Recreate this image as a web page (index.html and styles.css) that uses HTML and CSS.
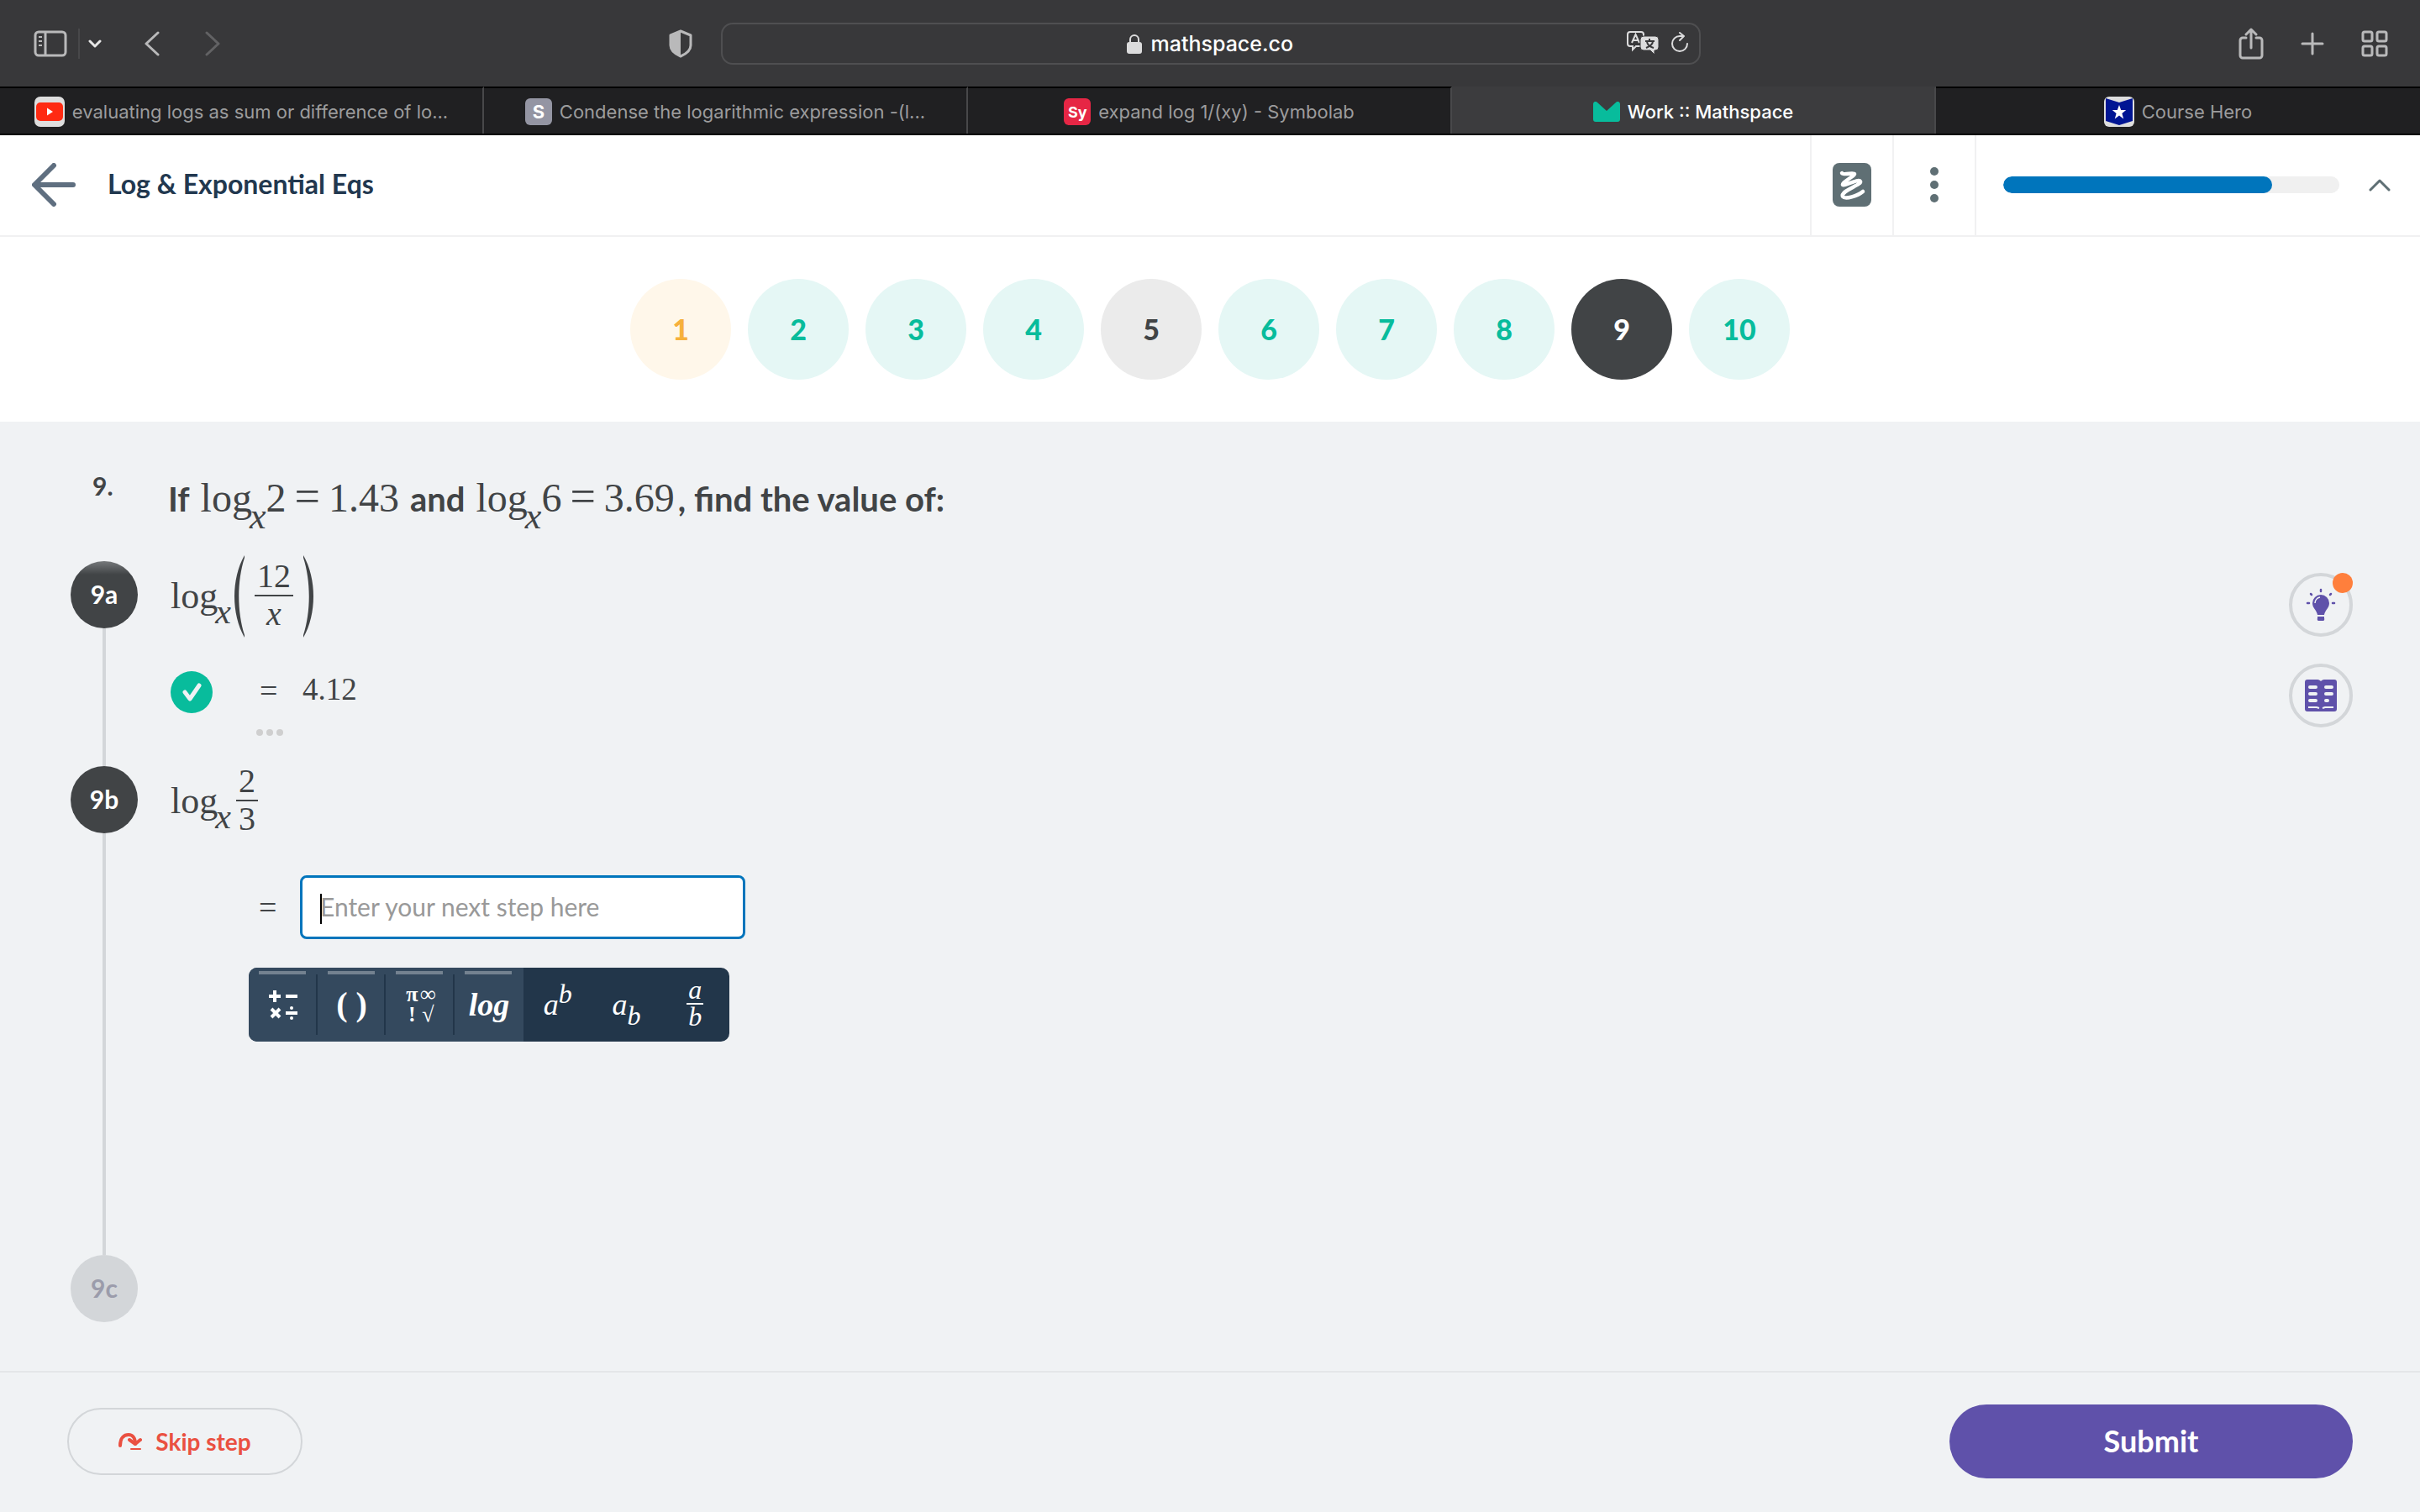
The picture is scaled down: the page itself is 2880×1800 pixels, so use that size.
FILE: index.html
```html
<!DOCTYPE html>
<html lang="en">
<head>
<meta charset="utf-8">
<title>Work :: Mathspace</title>
<link rel="stylesheet" href="styles.css">
</head>
<body>
<header class="browser">
  <div class="toolbar">
    <div class="tools tools-left">
      <button class="tool" aria-label="Show sidebar"><svg width="40" height="32" viewBox="0 0 40 32" fill="none" stroke="#b9b9ba" stroke-width="3"><rect x="2" y="2" width="36" height="28" rx="4"/><path d="M14 2v28"/><path d="M6 8h4M6 13h4M6 18h4" stroke-width="2"/></svg></button>
      <span class="tool-divider"></span>
      <button class="tool" aria-label="Sidebar menu"><svg width="16" height="12" viewBox="0 0 16 12" fill="none" stroke="#e6e6e6" stroke-width="3" stroke-linecap="round" stroke-linejoin="round"><path d="M2 3l6 6 6-6"/></svg></button>
      <button class="tool tool-back" aria-label="Back"><svg width="20" height="30" viewBox="0 0 20 30" fill="none" stroke="#b9b9ba" stroke-width="3" stroke-linecap="round" stroke-linejoin="round"><path d="M17 2L3 15l14 13"/></svg></button>
      <button class="tool tool-forward" aria-label="Forward"><svg width="20" height="30" viewBox="0 0 20 30" fill="none" stroke="#626264" stroke-width="3" stroke-linecap="round" stroke-linejoin="round"><path d="M3 2l14 13L3 28"/></svg></button>
    </div>
    <button class="tool tool-shield" aria-label="Privacy report"><svg width="28" height="34" viewBox="0 0 28 34" fill="none" stroke="#b9b9ba" stroke-width="3" stroke-linejoin="round"><path d="M14 2l12 5v12c0 6-5 10-12 13C7 29 2 25 2 19V7z"/><path d="M14 2v30C7 29 2 25 2 19V7z" fill="#b9b9ba" stroke="none"/></svg></button>
    <div class="address">
      <svg width="18" height="24" viewBox="0 0 18 24"><rect x="0" y="10" width="18" height="14" rx="3" fill="#dcdcdd"/><path d="M4 11V7a5 5 0 0 1 10 0v4" fill="none" stroke="#dcdcdd" stroke-width="2"/></svg>
      <input class="url" type="text" aria-label="Address" value="mathspace.co">
      <div class="address-actions">
        <button class="tool" aria-label="Translate"><svg width="38" height="28" viewBox="0 0 38 28"><path d="M4 1h13a3 3 0 0 1 3 3v11a3 3 0 0 1-3 3h-6l-4 4v-4H4a3 3 0 0 1-3-3V4a3 3 0 0 1 3-3z" fill="none" stroke="#dcdcdd" stroke-width="2"/><path d="M6 14l4.500-10L15 14M8 11h5" fill="none" stroke="#dcdcdd" stroke-width="2"/><path d="M20 6h14a4 4 0 0 1 4 4v9a4 4 0 0 1-4 4h-1v5l-5-5h-8a4 4 0 0 1-4-4v-9a4 4 0 0 1 4-4z" fill="#dcdcdd" stroke="#38383a" stroke-width="1"/><path d="M22 12h11M27 9v3M23 20c5-2 8-5 8-8M24 13c1 4 4 6 8 7" fill="none" stroke="#38383a" stroke-width="2"/></svg></button>
        <button class="tool" aria-label="Reload"><svg width="22" height="26" viewBox="0 0 22 26" fill="none" stroke="#dcdcdd" stroke-width="2" stroke-linecap="round" stroke-linejoin="round"><path d="M20 14a9 9 0 1 1-9-9h4"/><path d="M11 1l5 4-5 5"/></svg></button>
      </div>
    </div>
    <div class="tools tools-right">
      <button class="tool" aria-label="Share"><svg width="30" height="38" viewBox="0 0 30 38" fill="none" stroke="#b9b9ba" stroke-width="3" stroke-linecap="round" stroke-linejoin="round"><path d="M9 12H5a3 3 0 0 0-3 3v18a3 3 0 0 0 3 3h20a3 3 0 0 0 3-3V15a3 3 0 0 0-3-3h-4M15 24V2M9 8l6-6 6 6"/></svg></button>
      <button class="tool" aria-label="New tab"><svg width="28" height="28" viewBox="0 0 28 28" stroke="#b9b9ba" stroke-width="3" stroke-linecap="round"><path d="M14 2v24M2 14h24"/></svg></button>
      <button class="tool" aria-label="Tab overview"><svg width="32" height="32" viewBox="0 0 32 32" fill="none" stroke="#b9b9ba" stroke-width="3"><rect x="2" y="2" width="11" height="11" rx="2"/><rect x="19" y="2" width="11" height="11" rx="2"/><rect x="2" y="19" width="11" height="11" rx="2"/><rect x="19" y="19" width="11" height="11" rx="2"/></svg></button>
    </div>
  </div>
  <nav class="tabs">
    <a class="tab" href="#"><svg width="36" height="36" viewBox="0 0 36 36"><rect width="36" height="36" rx="7" fill="#dedede"/><rect x="2" y="7" width="32" height="22" rx="5" fill="#ff2a12"/><path d="M15 13.500v9l7-4.500z" fill="#fff"/></svg><span>evaluating logs as sum or difference of lo...</span></a>
    <a class="tab" href="#"><span class="favicon favicon-s">S</span><span>Condense the logarithmic expression -(l...</span></a>
    <a class="tab" href="#"><span class="favicon favicon-sy">Sy</span><span>expand log 1/(xy) - Symbolab</span></a>
    <a class="tab tab-current" href="#"><svg width="32" height="24" viewBox="0 0 32 24"><path d="M0 3c0-3 3-4 5-2l11 10L27 1c2-2 5-1 5 2v18a3 3 0 0 1-3 3H3a3 3 0 0 1-3-3z" fill="#08bc9c"/></svg><span>Work :: Mathspace</span></a>
    <a class="tab" href="#"><svg width="36" height="36" viewBox="0 0 36 36"><rect width="36" height="36" rx="6" fill="#dedede"/><path d="M2 2l16 5 16-5v27l-16 5-16-5z" fill="#001593"/><path d="M18 10l2.200 6h6l-4.800 4 1.800 6.500-5.200-4-5.200 4 1.800-6.500-4.800-4h6z" fill="#fff"/></svg><span>Course Hero</span></a>
  </nav>
</header>

<div class="topbar">
  <a class="back" href="#" aria-label="Back"><svg width="52" height="52" viewBox="0 0 52 52" fill="none" stroke="#5f6f80" stroke-width="6" stroke-linecap="round" stroke-linejoin="round"><path d="M26 3L3 26l23 23M4 26h45"/></svg></a>
  <h1 class="title">Log &amp; Exponential Eqs</h1>
  <button class="cell" aria-label="Scratchpad"><svg width="46" height="52" viewBox="0 0 46 52"><rect width="46" height="52" rx="8" fill="#5f6f74"/><path d="M11 12c2 3 14-1 15 1S11 23 12 26c2 2 19-8 21-4 2 4-24 11-21 18 3 4 18-1 24-6" fill="none" stroke="#fff" stroke-width="4.500" stroke-linecap="round" stroke-linejoin="round"/></svg></button>
  <button class="cell" aria-label="More options"><svg width="10" height="42" viewBox="0 0 10 42" fill="#5f6f74"><circle cx="5" cy="5" r="5"/><circle cx="5" cy="21" r="5"/><circle cx="5" cy="37" r="5"/></svg></button>
  <div class="cell cell-progress">
    <progress class="progress" max="100" value="80" aria-label="Progress"></progress>
    <button class="tool" aria-label="Collapse"><svg width="28" height="16" viewBox="0 0 28 16" fill="none" stroke="#5f6f74" stroke-width="3" stroke-linecap="round" stroke-linejoin="round"><path d="M3 14L14 3l11 11"/></svg></button>
  </div>
</div>

<nav class="questions">
  <a class="question-link partial" href="#">1</a>
  <a class="question-link" href="#">2</a>
  <a class="question-link" href="#">3</a>
  <a class="question-link" href="#">4</a>
  <a class="question-link skipped" href="#">5</a>
  <a class="question-link" href="#">6</a>
  <a class="question-link" href="#">7</a>
  <a class="question-link" href="#">8</a>
  <a class="question-link current" href="#">9</a>
  <a class="question-link" href="#">10</a>
</nav>

<main class="work">
  <div class="steps">
    <div class="intro">
      <span class="number">9.</span>
      <p class="prompt"><span>If</span><span class="math">log<sub>x</sub>2<span class="eq">=</span>1.43</span><span>and</span><span class="ending"><span class="math">log<sub>x</sub>6<span class="eq">=</span>3.69</span><span>, find the value of:</span></span></p>
    </div>

    <section class="step">
      <div class="rail"><span class="badge badge-first">9a</span><span class="line"></span></div>
      <div class="body">
        <div class="expression">
          <span class="math">log<sub>x</sub></span>
          <svg class="paren" width="12" height="98" viewBox="0 0 12 98" fill="#414446"><path d="M12 0C-4 28-4 70 12 98V95C3 67 3 31 12 3z"/></svg>
          <span class="fraction fraction-wide"><span>12</span><i>x</i></span>
          <svg class="paren" width="12" height="98" viewBox="0 0 12 98" fill="#414446"><path d="M0 0c16 28 16 70 0 98v-3c9-28 9-64 0-92z"/></svg>
        </div>
        <div class="answer">
          <svg class="check" width="50" height="50" viewBox="0 0 50 50"><circle cx="25" cy="25" r="25" fill="#08bc9c"/><path d="M17 25l6 8 11-16" fill="none" stroke="#f0f2f4" stroke-width="5" stroke-linecap="round" stroke-linejoin="round"/></svg>
          <span class="equals">=</span><span class="value">4.12</span>
        </div>
        <button class="more" aria-label="Show steps"><svg width="32" height="8" viewBox="0 0 32 8" fill="#cfcfcf"><circle cx="4" cy="4" r="4"/><circle cx="16" cy="4" r="4"/><circle cx="28" cy="4" r="4"/></svg></button>
      </div>
    </section>

    <section class="step step-active">
      <div class="rail"><span class="badge">9b</span><span class="line"></span></div>
      <div class="body">
        <div class="expression">
          <span class="math">log<sub>x</sub></span>
          <span class="fraction"><span>2</span><span>3</span></span>
        </div>
        <div class="entry">
          <label class="equals" for="next-step">=</label>
          <div class="field"><input id="next-step" class="next-step" type="text" placeholder="Enter your next step here"><span class="caret"></span></div>
        </div>
        <div class="keypad">
          <button class="key group" aria-label="Operators"><svg width="36" height="36" viewBox="0 0 36 36" fill="none" stroke="#fff" stroke-width="4"><path d="M8 1v14M1 8h14M21 8h14M21 28h14M4 23l10 10M14 23L4 33"/><circle cx="28" cy="22" r="2" fill="#fff" stroke="none"/><circle cx="28" cy="34" r="2" fill="#fff" stroke="none"/></svg></button>
          <button class="key group brackets">(&nbsp;)</button>
          <button class="key group symbols"><span>π</span><span>∞</span><span>!</span><span>√</span></button>
          <button class="key group logkey">log</button>
          <button class="key">a<sup>b</sup></button>
          <button class="key">a<sub>b</sub></button>
          <button class="key"><span class="keyfraction"><span>a</span><span>b</span></span></button>
        </div>
      </div>
    </section>

    <section class="step">
      <div class="rail"><span class="badge badge-locked">9c</span></div>
    </section>
  </div>

  <aside class="helpers">
    <button class="helper" aria-label="Hint"><svg width="36" height="40" viewBox="0 0 36 40"><path d="M18 8a10 10 0 0 0-10 10c0 6 5 8 6 14h8c1-6 6-8 6-14A10 10 0 0 0 18 8z" fill="#5f51aa"/><path d="M14 34h8v2a2 2 0 0 1-2 3h-4a2 2 0 0 1-2-3z" fill="#5f51aa"/><path d="M11 18a7 7 0 0 1 6-7" fill="none" stroke="#f0f2f4" stroke-width="1.500"/><path d="M18 2v2M6 7l1 1M30 7l-1 1M2 18h2M32 18h2" stroke="#5f51aa" stroke-width="2.500" stroke-linecap="round"/></svg><span class="dot"></span></button>
    <button class="helper" aria-label="Lesson"><svg width="38" height="38" viewBox="0 0 38 38"><path d="M3 0h12c2 0 3 1 4 2 1-1 2-2 4-2h12a3 3 0 0 1 3 3v32a3 3 0 0 1-3 3H3a3 3 0 0 1-3-3V3a3 3 0 0 1 3-3z" fill="#5f51aa"/><path d="M6 9h7M6 17h7M6 25h7M25 9h7M25 17h7M25 25h2" stroke="#f0f2f4" stroke-width="4" stroke-linecap="round"/><path d="M4 33h10l3 1M21 34l3-1h10" fill="none" stroke="#f0f2f4" stroke-width="2"/></svg></button>
  </aside>
</main>

<footer class="actions">
  <button class="skip"><svg width="28" height="22" viewBox="0 0 28 22" fill="none" stroke="#ea5041" stroke-width="4" stroke-linecap="round" stroke-linejoin="round"><path d="M2 16C2 6 7 3 12 3c5 0 8 4 8 11"/><path d="M13 9l7 5 6-5"/><path d="M15 20h11" stroke-width="2"/></svg>Skip step</button>
  <button class="submit">Submit</button>
</footer>
</body>
</html>
```
FILE: styles.css
```css
* { box-sizing: border-box; }

body {
  margin: 0;
  min-height: 100vh;
  display: flex;
  flex-direction: column;
  background: #f0f2f4;
  color: #414446;
  font-family: Lato, sans-serif;
  font-size: 30px;
}

button, input { font: inherit; color: inherit; }
button { border: 0; padding: 0; background: none; cursor: pointer; }
a { color: inherit; text-decoration: none; }
svg { display: block; flex: none; }

/* Browser chrome */
.browser { background: #38383a; font-family: Inter, sans-serif; }
.toolbar {
  height: 103px;
  display: grid;
  grid-template-columns: 1fr 1166px 1fr;
  align-items: center;
  padding: 0 38px 0 40px;
}
.tool { display: flex; align-items: center; justify-content: center; }
.tools { display: flex; align-items: center; grid-row: 1; }
.tools-left { grid-column: 1; }
.tools-right { grid-column: 3; justify-content: flex-end; gap: 44px; }
.tool-divider { width: 2px; height: 36px; background: #48484a; margin: 0 10px 0 13px; }
.tool-back { margin-left: 50px; }
.tool-forward { margin-left: 52px; }
.tool-shield { grid-column: 1; grid-row: 1; justify-self: end; margin-right: 34px; }
.address {
  grid-column: 2;
  height: 50px;
  border: 2px solid #4f4f51;
  border-radius: 14px;
  display: flex;
  align-items: center;
  justify-content: center;
  gap: 11px;
  position: relative;
}
.url {
  width: 172px;
  padding: 0;
  border: 0;
  outline: 0;
  background: none;
  color: #fff;
  font-size: 25px;
  font-weight: 500;
}
.address-actions { position: absolute; right: 12px; top: 8px; display: flex; gap: 14px; }

.tabs {
  display: grid;
  grid-template-columns: repeat(5, 1fr);
  height: 58px;
  border-bottom: 2px solid #000;
}
.tab {
  display: flex;
  align-items: center;
  justify-content: center;
  gap: 9px;
  padding-top: 2px;
  background: #202022;
  border-top: 2px solid #000;
  border-right: 2px solid #48484a;
  color: #9c9c9d;
  font-size: 22px;
  white-space: nowrap;
}
.tab:last-child { border-right: 0; }
.tab-current { background: #3c3c3e; border-top-color: #3c3c3e; color: #fff; font-weight: 500; }
.favicon {
  width: 32px;
  height: 32px;
  border-radius: 6px;
  display: grid;
  place-items: center;
  color: #fff;
  font-weight: 700;
  font-size: 22px;
}
.favicon-s { background: #9495a3; }
.favicon-sy { background: #e62645; font-size: 18px; }

/* Task header */
.topbar {
  height: 121px;
  display: flex;
  align-items: stretch;
  background: #fff;
  border-bottom: 2px solid #f1f1f2;
}
.back { display: flex; align-items: center; padding: 0 38px 2px; }
.title { margin: 0 auto 0 0; padding-bottom: 4px; align-self: center; font-size: 32px; line-height: 40px; font-weight: 700; color: #22384f; }
.cell {
  width: 98px;
  padding-bottom: 2px;
  border-left: 2px solid #f1f1f2;
  display: flex;
  align-items: center;
  justify-content: center;
}
.cell-progress { width: 530px; padding: 0 34px 2px 32px; justify-content: space-between; }
.progress { appearance: none; width: 400px; height: 20px; border: 0; border-radius: 10px; overflow: hidden; background: #f0f0f0; }
.progress::-webkit-progress-bar { background: #f0f0f0; border-radius: 10px; }
.progress::-webkit-progress-value { background: #0075bc; border-radius: 10px; }

.questions {
  display: flex;
  justify-content: center;
  gap: 20px;
  padding: 50px 0;
  background: #fff;
}
.question-link {
  width: 120px;
  height: 120px;
  padding-bottom: 2px;
  border-radius: 50%;
  display: grid;
  place-items: center;
  background: #e5f7f5;
  color: #08bc9c;
  font-size: 34px;
  font-weight: 900;
}
.partial { background: #fff7ea; color: #f6b03c; }
.skipped { background: #ebebeb; color: #414446; }
.current { background: #414446; color: #fff; }

/* Workspace */
.work { flex: 1; display: flex; justify-content: space-between; padding: 0 80px 58px 84px; }
.steps { flex: 1; display: flex; flex-direction: column; }
.intro { display: flex; height: 166px; padding-top: 58px; gap: 36px; font-weight: 700; }
.number { width: 80px; padding-left: 26px; line-height: 36px; }
.prompt { margin: 0; display: flex; align-items: baseline; gap: 13px; font-size: 40px; line-height: 66px; }
.math { font-family: "Liberation Serif", serif; font-weight: 400; font-size: 48px; }
.math sub { margin-left: -3px; font-size: 44px; font-style: italic; line-height: 0; vertical-align: -20px; }
.eq { margin: 0 10px; font-size: 54px; line-height: 0; }
.ending { display: flex; align-items: baseline; gap: 4px; }

.step { display: flex; gap: 36px; }
.step-active { flex: 1; }
.rail { width: 80px; display: flex; flex-direction: column; align-items: center; }
.line { flex: 1; width: 4px; background: #d3d6d9; }
.badge {
  width: 80px;
  height: 80px;
  padding-bottom: 2px;
  border-radius: 50%;
  display: grid;
  place-items: center;
  background: #414446;
  color: #fff;
  font-weight: 700;
}
.badge-first { background: linear-gradient(#76797b, #414446 16px); }
.badge-locked { background: #d3d6d9; color: #9b9cab; }
.body { font-family: "Liberation Serif", serif; font-size: 38px; }
.expression { display: flex; align-items: center; height: 84px; padding-left: 3px; }
.expression .math { padding-bottom: 2px; font-size: 44px; }
.expression .math sub { font-size: 42px; vertical-align: -18px; }
.paren { margin: 0 4px; }
.fraction {
  display: grid;
  justify-items: center;
  margin: 0 0 2px 6px;
  width: 26px;
  font-size: 40px;
  line-height: 42px;
}
.fraction > :first-child { width: 100%; padding-bottom: 2px; text-align: center; line-height: 40px; border-bottom: 2px solid #414446; }
.fraction-wide { width: 46px; margin: 0 8px 2px; }
.answer { display: flex; align-items: center; height: 50px; margin-top: 47px; padding-left: 3px; }
.equals { width: 49px; }
.answer .equals { width: 51px; padding-bottom: 4px; }
.value { padding-bottom: 8px; font-size: 37px; }
.check { margin-right: 56px; }
.more { display: flex; margin: 19px 0 36px 105px; }
.entry { display: flex; align-items: center; margin-top: 46px; padding-left: 108px; }
.field { position: relative; }
.next-step {
  display: block;
  width: 530px;
  height: 76px;
  padding: 0 21px 2px;
  border: 3px solid #0075bc;
  border-radius: 8px;
  background: #fff;
  outline: 0;
  font-family: Lato, sans-serif;
  font-size: 30px;
}
.next-step::placeholder { color: #999; opacity: 1; }
.caret { position: absolute; left: 24px; top: 22px; width: 2px; height: 36px; background: #000; }

.keypad {
  display: flex;
  width: 572px;
  height: 88px;
  margin: 34px 0 0 96px;
  border-radius: 10px;
  overflow: hidden;
  background: #22364a;
  color: #fff;
}
.key { width: 82px; height: 88px; font-size: 36px; font-style: italic; line-height: 36px; position: relative; }
.key sup, .key sub { font-size: 32px; line-height: 0; }
.key sup { vertical-align: 14px; }
.key sub { vertical-align: -12px; }
.group { background: #34495e; display: flex; align-items: center; justify-content: center; font-style: normal; font-weight: 700; }
.group::before { content: ""; position: absolute; top: 4px; left: 12px; width: 56px; height: 4px; background: #748290; }
.group::after { content: ""; position: absolute; top: 8px; right: 0; width: 2px; height: 72px; background: #22364a; }
.logkey { font-size: 38px; font-style: italic; }
.logkey::after { display: none; }
.brackets { font-size: 40px; }
.symbols { display: grid; grid-template-columns: 18px 20px; justify-items: center; align-content: center; font-size: 26px; line-height: 24px; }
.keyfraction { display: grid; width: 20px; margin: 0 auto; padding-bottom: 4px; font-size: 32px; line-height: 28px; }
.keyfraction > :first-child { padding-bottom: 2px; border-bottom: 2px solid #fff; }

.helpers { display: flex; flex-direction: column; gap: 32px; padding-top: 180px; }
.helper {
  width: 76px;
  height: 76px;
  border: 4px solid #d3d6d9;
  border-radius: 50%;
  display: grid;
  place-items: center;
  position: relative;
}
.dot { position: absolute; top: -4px; right: -4px; width: 24px; height: 24px; border-radius: 50%; background: #ff7f3c; }

/* Footer */
.actions {
  display: flex;
  align-items: center;
  justify-content: space-between;
  padding: 38px 80px 40px;
  border-top: 2px solid #e4e6e8;
}
.skip {
  width: 280px;
  height: 80px;
  border: 2px solid #d3d6d9;
  border-radius: 40px;
  display: flex;
  align-items: center;
  justify-content: center;
  gap: 16px;
  color: #ea5041;
  font-size: 28px;
  font-weight: 700;
}
.submit { width: 480px; height: 88px; padding-bottom: 2px; border-radius: 44px; background: #5f51aa; color: #fff; font-size: 36px; font-weight: 700; }
```
